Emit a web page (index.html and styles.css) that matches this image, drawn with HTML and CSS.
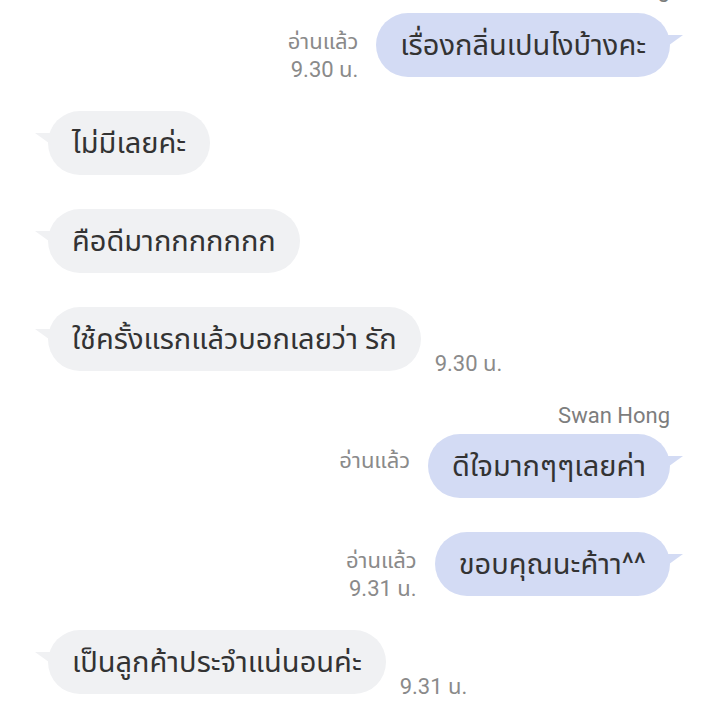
FILE: index.html
```html
<!DOCTYPE html>
<html lang="th">
  <head>
    <meta charset="UTF-8" />
    <meta name="viewport" content="width=device-width, initial-scale=1.0" />
    <title>แชท</title>
    <link rel="stylesheet" href="styles.css">
  </head>
  <body>
    <div class="chat">
      <div class="name name-top">Swan Hong</div>
      <div class="row row-out row-tight">
        <div class="meta">
          <span>อ่านแล้ว</span>
          <span>9.30 น.</span>
        </div>
        <div class="bubble bubble-out">เรื่องกลิ่นเปนไงบ้างคะ</div>
      </div>

      <div class="row row-in">
        <div class="bubble bubble-in">ไม่มีเลยค่ะ</div>
      </div>

      <div class="row row-in">
        <div class="bubble bubble-in">คือดีมากกกกกกก</div>
      </div>

      <div class="row row-in">
        <div class="bubble bubble-in">ใช้ครั้งแรกแล้วบอกเลยว่า รัก</div>
        <div class="meta">
          <span>9.30 น.</span>
        </div>
      </div>

      <div class="name name-gap">Swan Hong</div>
      <div class="row row-out row-tight">
        <div class="meta meta-up">
          <span>อ่านแล้ว</span>
        </div>
        <div class="bubble bubble-out">ดีใจมากๆๆเลยค่า</div>
      </div>

      <div class="row row-out">
        <div class="meta">
          <span>อ่านแล้ว</span>
          <span>9.31 น.</span>
        </div>
        <div class="bubble bubble-out">ขอบคุณนะค้าา^^</div>
      </div>

      <div class="row row-in">
        <div class="bubble bubble-in">เป็นลูกค้าประจำแน่นอนค่ะ</div>
        <div class="meta">
          <span>9.31 น.</span>
        </div>
      </div>
    </div>
  </body>
</html>
```

FILE: styles.css
```css
* {
  margin: 0;
  padding: 0;
  box-sizing: border-box;
}

body {
  background-color: #ffffff;
  font-family: Roboto, "Noto Sans", "Noto Sans Thai", sans-serif;
  color: #333333;
  overflow: hidden;
}

.chat {
  display: flex;
  flex-direction: column;
  padding: 0 44px 0 48px;
}

.name {
  align-self: flex-end;
  font-size: 22px;
  line-height: 24px;
  color: #7d7d7d;
  margin-bottom: 6px;
}

/* only the tail of the name above the first message is visible */
.name-top {
  margin-top: -22px;
  margin-bottom: 11px;
}

.name-gap {
  margin-top: 33px;
}

.row {
  display: flex;
  align-items: flex-end;
  margin-top: 34px;
}

.row-tight {
  margin-top: 0;
}

.row-out {
  justify-content: flex-end;
  gap: 18px;
}

.row-in {
  justify-content: flex-start;
  gap: 14px;
}

.meta {
  display: flex;
  flex-direction: column;
  align-items: flex-end;
  font-size: 22px;
  line-height: 28px;
  color: #8a8a8a;
  margin-bottom: -7px;
}

.meta-up {
  align-self: center;
  margin-bottom: 10px;
}

.bubble {
  position: relative;
  height: 64px;
  padding: 0 24px;
  border-radius: 32px;
  font-size: 29px;
  line-height: 64px;
  white-space: nowrap;
}

.bubble-out {
  background-color: #d3dbf4;
}

.bubble-in {
  background-color: #f0f1f3;
}

.bubble::after {
  content: "";
  position: absolute;
  top: 22px;
  width: 18px;
  height: 13px;
}

.bubble-out::after {
  right: -13px;
  background-color: #d3dbf4;
  clip-path: polygon(0 0, 100% 0, 0 100%);
}

.bubble-in::after {
  left: -13px;
  background-color: #f0f1f3;
  clip-path: polygon(0 0, 100% 0, 100% 100%);
}
```
